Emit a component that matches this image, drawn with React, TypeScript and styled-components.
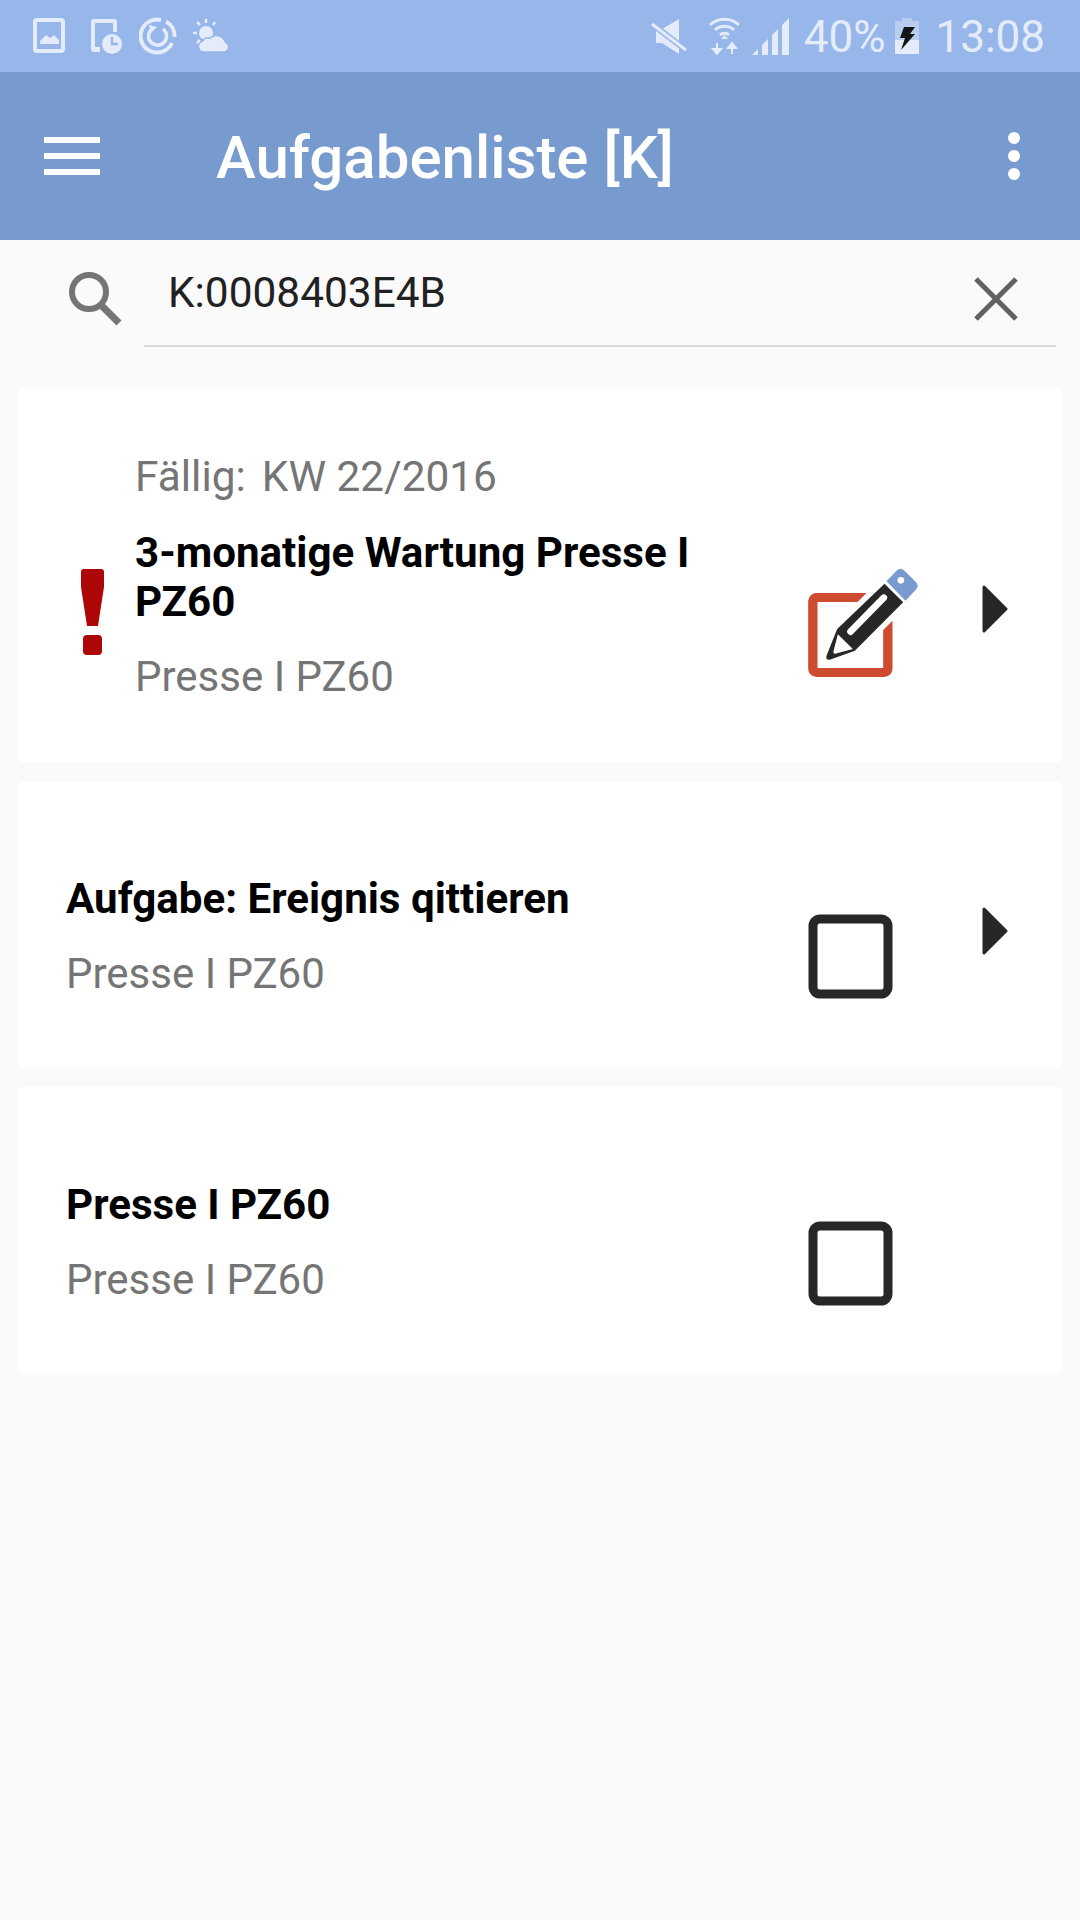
import styled, { createGlobalStyle } from "styled-components";

const GlobalStyle = createGlobalStyle`
  html, body {
    margin: 0;
    padding: 0;
    background: #fafafa;
  }
  body {
    font-family: Roboto, "Liberation Sans", sans-serif;
  }
`;

const Screen = styled.div`
  width: 1080px;
  height: 1920px;
  overflow: hidden;
  background: #fafafa;
`;

const StatusBar = styled.div`
  height: 72px;
  background: #97b6e9;
  display: flex;
  align-items: center;
  padding: 0 35px 0 33px;
  color: #e4ecfb;
`;

const StatusIcon = styled.svg<{ $gap?: number }>`
  display: block;
  flex: none;
  margin-right: ${(p) => p.$gap ?? 0}px;
`;

const Spacer = styled.div`
  flex: 1;
`;

const StatusText = styled.span<{ $gap?: number }>`
  font-size: 44px;
  line-height: 72px;
  padding-top: 2px;
  margin-right: ${(p) => p.$gap ?? 0}px;
`;

const AppBar = styled.div`
  height: 168px;
  background: #789bcf;
  display: flex;
  align-items: center;
  padding: 0 44px;
  color: #fff;
`;

const Burger = styled.div`
  width: 56px;
  display: flex;
  flex-direction: column;
  gap: 10px;
  margin-right: 116px;
  span {
    display: block;
    height: 6px;
    background: #fff;
  }
`;

const AppTitle = styled.div`
  flex: 1;
  font-size: 60px;
  font-weight: 500;
  line-height: 72px;
  margin-top: 4px;
`;

const Dots = styled.div`
  display: flex;
  flex-direction: column;
  gap: 6px;
  margin-right: 16px;
  span {
    display: block;
    width: 12px;
    height: 12px;
    border-radius: 50%;
    background: #fff;
  }
`;

const SearchRow = styled.div`
  display: flex;
  align-items: flex-start;
  padding: 0 24px 0 68px;
  margin-bottom: 40px;
`;

const SearchGlyph = styled.svg`
  flex: none;
  margin: 32px 20px 0 0;
`;

const SearchField = styled.div`
  flex: 1;
  height: 105px;
  border-bottom: 2px solid #d9d9d9;
  display: flex;
  justify-content: space-between;
  padding-left: 24px;
  padding-right: 38px;
`;

const SearchValue = styled.div`
  font-size: 42.4px;
  line-height: 50px;
  margin-top: 28px;
  color: #212121;
`;

const ClearGlyph = styled.svg`
  margin-top: 37px;
`;

const List = styled.div`
  display: flex;
  flex-direction: column;
  gap: 18px;
  padding: 0 18px;
`;

const Card = styled.div<{ $height: number; $top: number }>`
  height: ${(p) => p.$height}px;
  box-sizing: border-box;
  padding: ${(p) => p.$top}px 54px 0 48px;
  background: #fff;
  border-radius: 7px;
  display: flex;
  align-items: flex-start;
`;

const AlertSlot = styled.div`
  width: 69px;
  flex: none;
  padding: 117px 0 0 14px;
  box-sizing: border-box;
`;

const CardBody = styled.div`
  flex: 1;
  min-width: 0;
`;

const Due = styled.div`
  display: flex;
  gap: 16px;
  font-size: 42.4px;
  line-height: 50px;
  color: #757575;
  margin-bottom: 26px;
`;

const Title = styled.div`
  font-size: 42.1px;
  font-weight: 700;
  line-height: 49px;
  color: #000;
  max-width: 600px;
`;

const Sub = styled.div`
  font-size: 42px;
  line-height: 50px;
  color: #757575;
  margin-top: 26px;
`;

const StateSlot = styled.div<{ $top: number }>`
  width: 86px;
  flex: none;
  margin-top: ${(p) => p.$top}px;
  svg {
    display: block;
  }
`;

const ArrowSlot = styled.div<{ $top: number }>`
  width: 26px;
  flex: none;
  margin-left: 88px;
  margin-top: ${(p) => p.$top}px;
  svg {
    display: block;
  }
`;

const CheckBoxIcon = () => (
  <svg width="86" height="86" viewBox="0 0 86 86">
    <rect x="5" y="5" width="75" height="75" rx="7" fill="none" stroke="#272727" strokeWidth="9" />
  </svg>
);

const EditIcon = () => (
  <svg width="111" height="109" viewBox="143 85 332 327">
    <path
      d="M318 160 H168 a25 25 0 0 0 -25 25 V387 a25 25 0 0 0 25 25 H371 a25 25 0 0 0 25 -25 V243 L368 271 V385 H171 V187 H291 Z"
      fill="#cd4c30"
    />
    <path d="M372 132 L428 188 L283 333 L208 360 Q195 362 198 348 L230 268 Z" fill="#272727" />
    <path d="M232 284 L277 328 L224 342 Q217 343 219 335 Z" fill="#fff" />
    <path d="M270 276 L370 174" stroke="#fff" strokeWidth="20" strokeLinecap="round" />
    <path d="M378 125 L408 93 Q420 82 432 93 L466 127 Q477 138 466 150 L435 183 Z" fill="#789bcf" />
    <circle cx="421" cy="122" r="10" fill="#fff" />
  </svg>
);

const ArrowIcon = () => (
  <svg width="26" height="48" viewBox="0 0 26 48">
    <path d="M2 2 L24 24 L2 46 Z" fill="#272727" stroke="#272727" strokeWidth="3" strokeLinejoin="round" />
  </svg>
);

const AlertIcon = () => (
  <svg width="26" height="86" viewBox="0 0 26 86">
    <path d="M3 0 H21 a3 3 0 0 1 3 3 V18 L18 57 H7 L1 18 V3 a3 3 0 0 1 2 -3 Z" fill="#ac0606" />
    <rect x="3" y="66" width="19" height="20" rx="4" fill="#ac0606" />
  </svg>
);

const App = () => {
  return (
    <Screen>
      <GlobalStyle />
      <StatusBar>
        <StatusIcon $gap={24} width="32" height="36" viewBox="0 0 32 36">
          <rect x="2" y="2" width="28" height="31" rx="2" fill="none" stroke="currentColor" strokeWidth="4" />
          <path d="M7 26 L7 23 L13 17 L17 20 L21 17 L26 22 V26 Z" fill="currentColor" />
        </StatusIcon>
        <StatusIcon $gap={16} width="34" height="38" viewBox="0 0 34 38">
          <path d="M2 5 a3 3 0 0 1 3 -3 H25 a3 3 0 0 1 3 3 V15 H24 V6 H6 V30 H11 V35 H5 a3 3 0 0 1 -3 -3 Z" fill="currentColor" />
          <circle cx="23" cy="27" r="10" fill="currentColor" />
          <path d="M23 20 V27 H29" fill="none" stroke="#97b6e9" strokeWidth="2.5" />
        </StatusIcon>
        <StatusIcon $gap={16} width="38" height="38" viewBox="0 0 38 38">
          <path d="M33 26 A16.5 16.5 0 1 1 22 3" fill="none" stroke="currentColor" strokeWidth="4" />
          <path d="M27 4.5 A16.5 16.5 0 0 1 35.5 20" fill="none" stroke="currentColor" strokeWidth="4" />
          <path d="M12 13 A9 9 0 1 0 24 12" fill="none" stroke="currentColor" strokeWidth="3.5" />
          <path d="M10 8 L18 10 L12 16 Z" fill="currentColor" />
        </StatusIcon>
        <StatusIcon width="38" height="36" viewBox="0 0 38 36">
          <circle cx="13" cy="15" r="7" fill="currentColor" />
          <path d="M13 1 V5 M4 4 L7 7 M22 4 L20 7 M0 15 H4 M4 25 L7 22" stroke="currentColor" strokeWidth="2.5" />
          <path
            d="M11 34 a5.5 5.5 0 0 1 -1.5 -10.8 a6 6 0 0 1 7.5 -3 a9 9 0 0 1 15 3.5 a5.5 5.5 0 0 1 0 10.3 Z"
            fill="currentColor"
            stroke="#97b6e9"
            strokeWidth="1.5"
          />
        </StatusIcon>
        <Spacer />
        <StatusIcon $gap={22} width="36" height="36" viewBox="0 0 36 36">
          <path d="M5 11 H11 L28 1 V36 L11 25 H5 Z" fill="currentColor" />
          <path d="M1 6 L35 32" stroke="#97b6e9" strokeWidth="6" />
          <path d="M1 6 L35 32" stroke="currentColor" strokeWidth="3" />
        </StatusIcon>
        <StatusIcon $gap={12} width="31" height="38" viewBox="0 0 31 38">
          <path d="M1 8 A21 21 0 0 1 30 8 M6 13 A14 14 0 0 1 25 13 M11 18 A7 7 0 0 1 20 18" fill="none" stroke="currentColor" strokeWidth="3" />
          <path d="M15.5 18 L19 22 H12 Z" fill="currentColor" />
          <path d="M8 26 V33 M4 32 H12 L8 37 Z M23 37 V30 M19 31 H27 L23 26 Z" fill="currentColor" stroke="currentColor" strokeWidth="2" />
        </StatusIcon>
        <StatusIcon $gap={15} width="37" height="37" viewBox="0 0 37 37">
          <path d="M0 37 L6 31 V37 Z M10 27 L16 21 V37 H10 Z M20 17 L26 11 V37 H20 Z M30 7 L37 0 V37 H30 Z" fill="currentColor" />
        </StatusIcon>
        <StatusText $gap={10}>40%</StatusText>
        <StatusIcon $gap={16} width="24" height="36" viewBox="0 0 24 36">
          <path d="M7 0 H17 V3 H24 V36 H0 V3 H7 Z" fill="#b9cdf0" />
          <path d="M0 22 H24 V36 H0 Z" fill="currentColor" />
          <path d="M9 9 H20 L15 16 H20 L6 32 L10 20 H5 Z" fill="#151515" />
        </StatusIcon>
        <StatusText>13:08</StatusText>
      </StatusBar>
      <AppBar>
        <Burger>
          <span />
          <span />
          <span />
        </Burger>
        <AppTitle>Aufgabenliste [K]</AppTitle>
        <Dots>
          <span />
          <span />
          <span />
        </Dots>
      </AppBar>
      <SearchRow>
        <SearchGlyph width="56" height="56" viewBox="0 0 56 56">
          <circle cx="21" cy="20" r="17" fill="none" stroke="#757575" strokeWidth="6" />
          <path d="M33 33 L51 51" stroke="#757575" strokeWidth="7" />
        </SearchGlyph>
        <SearchField>
          <SearchValue>K:0008403E4B</SearchValue>
          <ClearGlyph width="44" height="44" viewBox="0 0 44 44">
            <path d="M2 2 L42 42 M42 2 L2 42" stroke="#616161" strokeWidth="5" />
          </ClearGlyph>
        </SearchField>
      </SearchRow>
      <List>
        <Card $height={376} $top={65}>
          <AlertSlot>
            <AlertIcon />
          </AlertSlot>
          <CardBody>
            <Due>
              <span>Fällig:</span>
              <span>KW 22/2016</span>
            </Due>
            <Title>3-monatige Wartung Presse I PZ60</Title>
            <Sub>Presse I PZ60</Sub>
          </CardBody>
          <StateSlot $top={116}>
            <EditIcon />
          </StateSlot>
          <ArrowSlot $top={133}>
            <ArrowIcon />
          </ArrowSlot>
        </Card>
        <Card $height={288} $top={93}>
          <CardBody>
            <Title>Aufgabe: Ereignis qittieren</Title>
            <Sub>Presse I PZ60</Sub>
          </CardBody>
          <StateSlot $top={40}>
            <CheckBoxIcon />
          </StateSlot>
          <ArrowSlot $top={33}>
            <ArrowIcon />
          </ArrowSlot>
        </Card>
        <Card $height={288} $top={93}>
          <CardBody>
            <Title>Presse I PZ60</Title>
            <Sub>Presse I PZ60</Sub>
          </CardBody>
          <StateSlot $top={41}>
            <CheckBoxIcon />
          </StateSlot>
          <ArrowSlot $top={33} />
        </Card>
      </List>
    </Screen>
  );
};

export default App;
